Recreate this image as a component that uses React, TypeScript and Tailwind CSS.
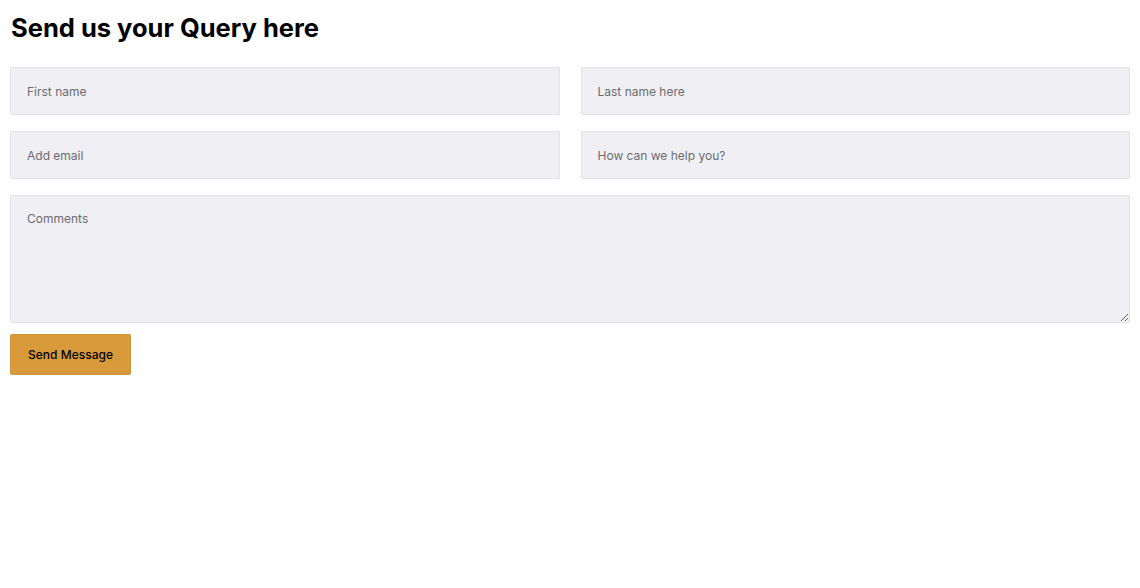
import React from 'react';

const fieldClass =
  'w-full h-12 px-4 bg-[#f0f0f4] border border-[#e1e1e6] rounded-[2px] text-[12px] text-gray-800 placeholder:text-[#6b6b70] outline-none';

export default function App() {
  return (
    <div className="min-h-screen bg-white px-[10px] pt-[10px] font-['Inter','Liberation_Sans',sans-serif]">
      <h1 className="pl-px text-[25.5px] font-bold leading-9 text-black mb-[21px]">Send us your Query here</h1>

      <form className="flex flex-col" onSubmit={(e) => e.preventDefault()}>
        {/* name / email rows */}
        <div className="grid grid-cols-2 gap-x-[21px] gap-y-4">
          <input className={fieldClass} placeholder="First name" />
          <input className={fieldClass} placeholder="Last name here" />
          <input className={fieldClass} placeholder="Add email" />
          <input className={fieldClass} placeholder="How can we help you?" />
        </div>

        <textarea
          className="mt-4 w-full h-32 px-4 pt-[15px] bg-[#f0f0f4] border border-[#e1e1e6] rounded-[2px] text-[12px] leading-4 placeholder:text-[#6b6b70] outline-none"
          placeholder="Comments"
        />

        <div className="mt-[11px]">
          <button
            type="submit"
            className="h-[41px] w-[121px] bg-[#d89a3a] border border-[#d0923a] rounded-[2px] text-[12px] font-medium text-black"
          >
            Send Message
          </button>
        </div>
      </form>
    </div>
  );
}
